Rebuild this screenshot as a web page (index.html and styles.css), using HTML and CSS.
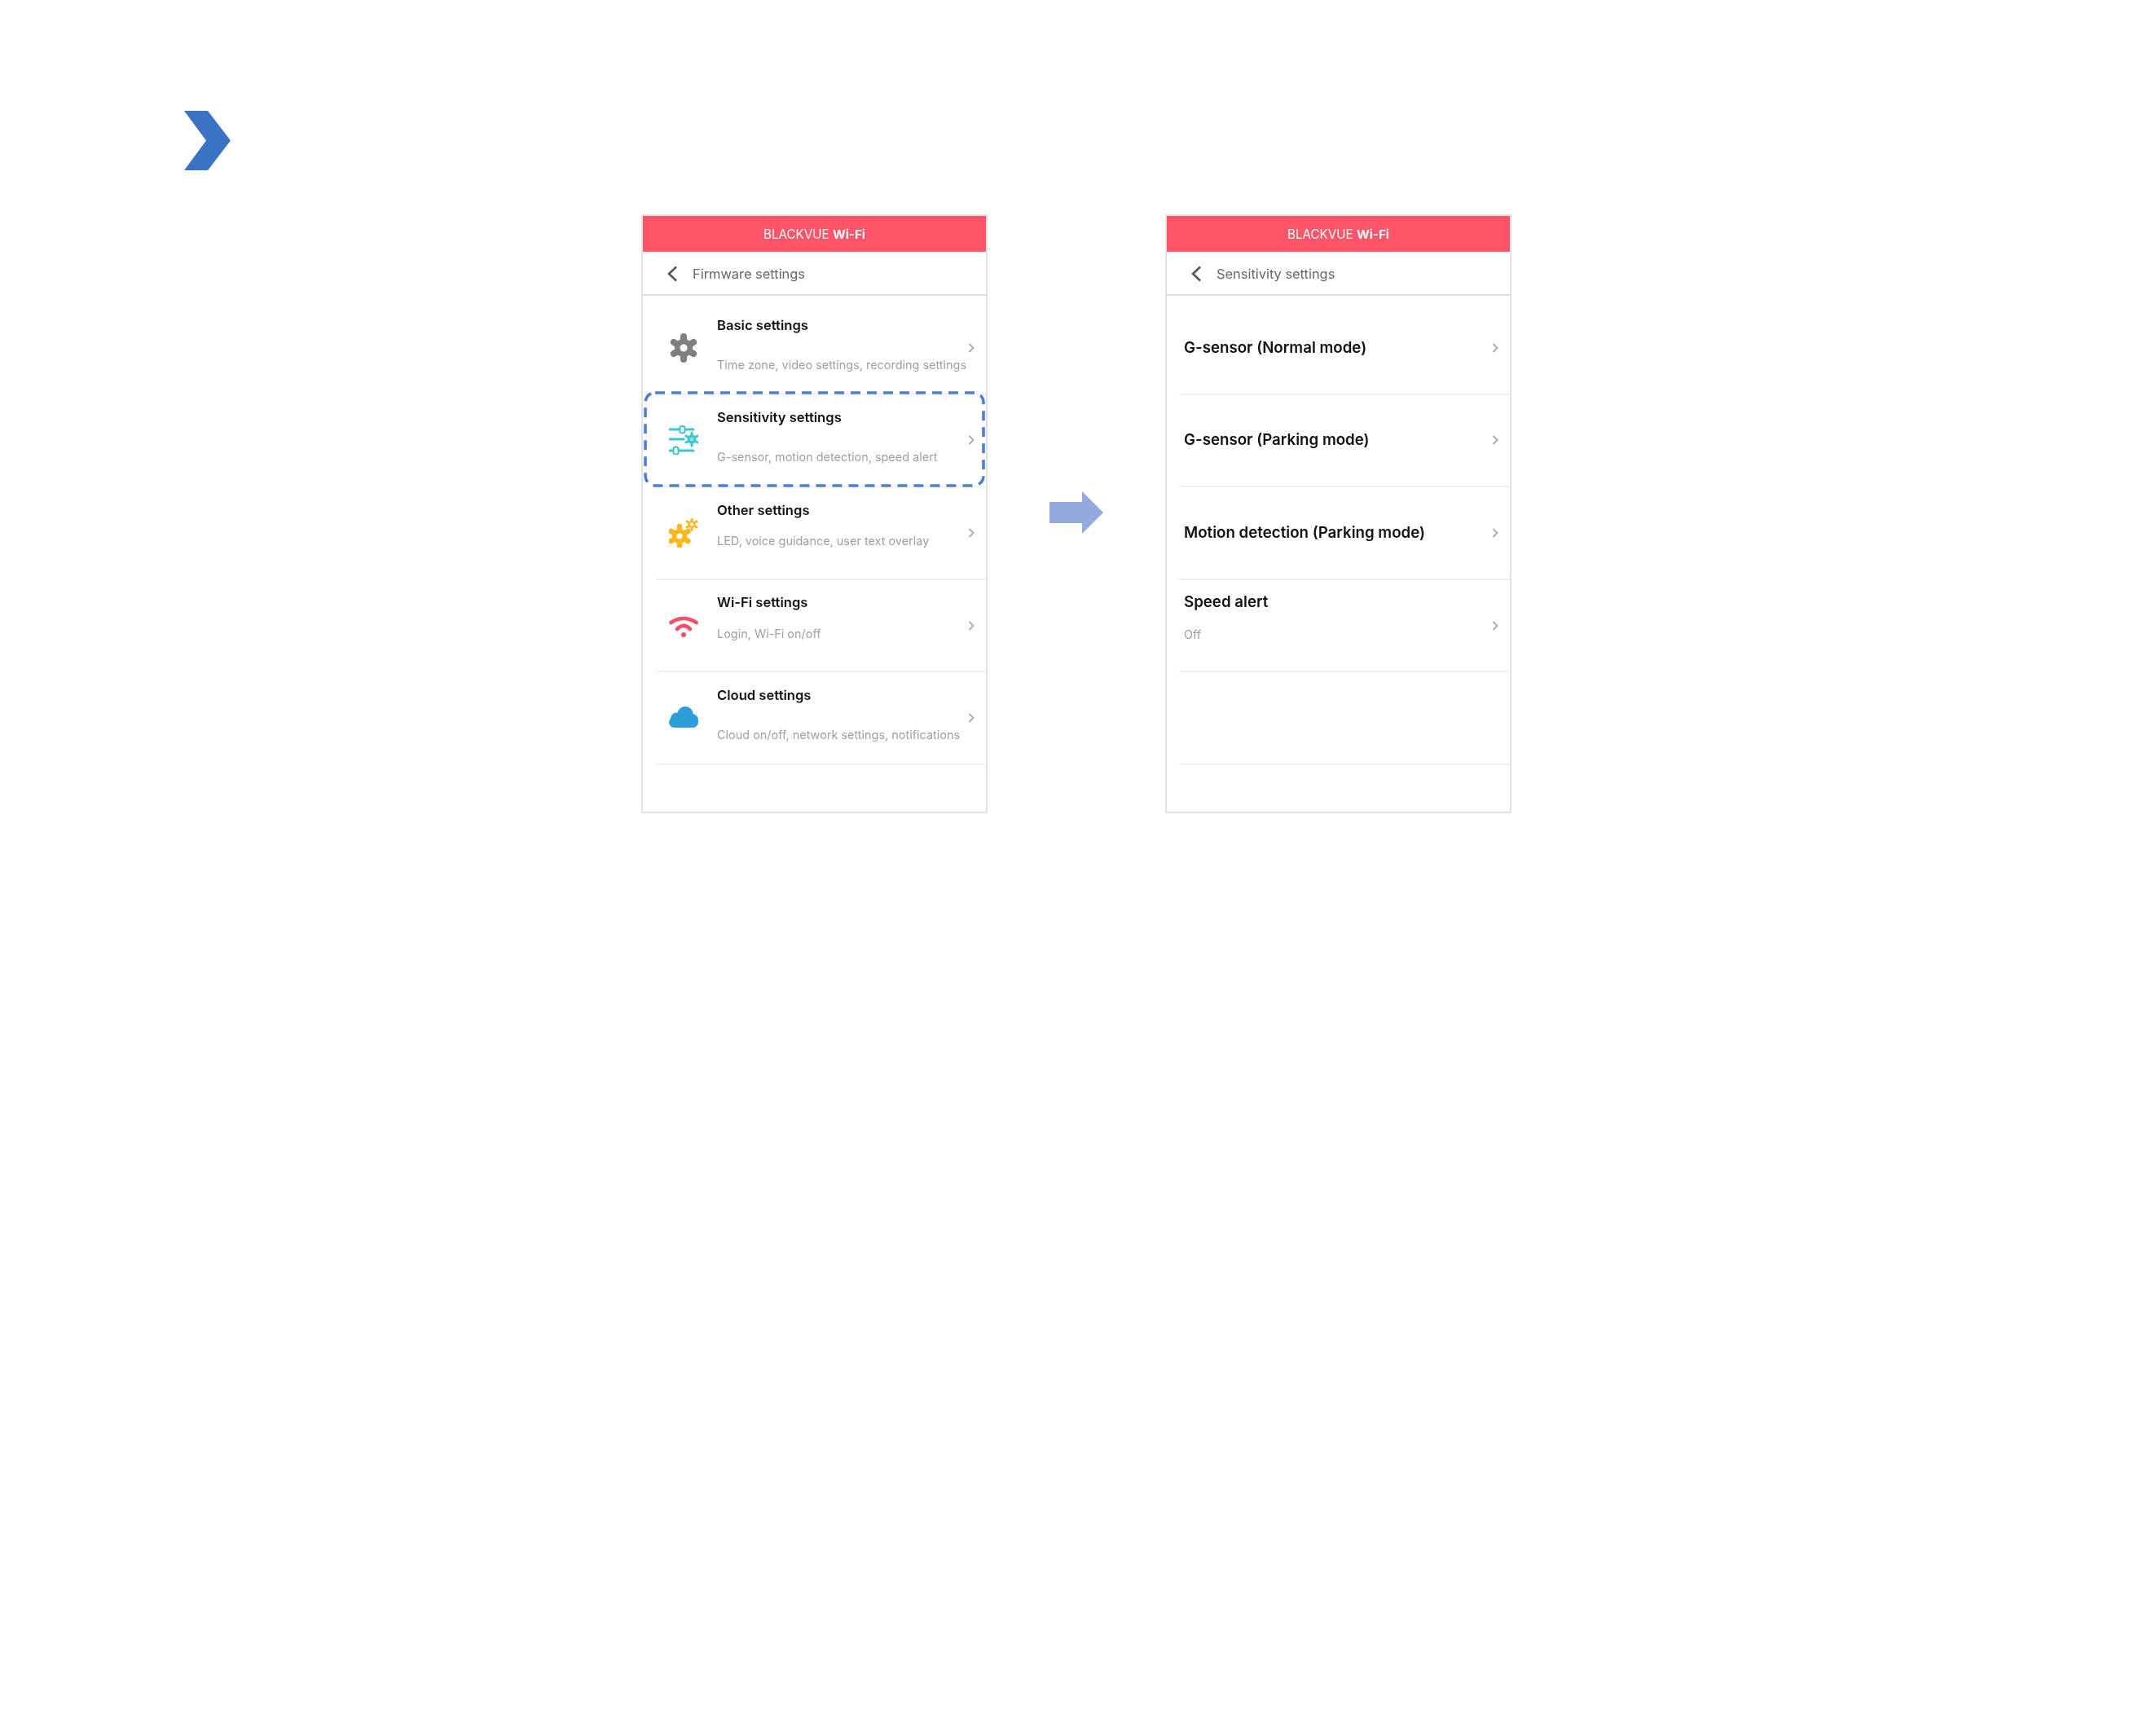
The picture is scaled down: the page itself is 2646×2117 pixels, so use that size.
FILE: index.html
```html
<!DOCTYPE html>
<html lang="en">
<head>
<meta charset="utf-8">
<title>Sensitivity settings</title>
<link rel="stylesheet" href="styles.css">
</head>
<body>
<header class="marker">
  <svg class="marker-icon" viewBox="0 0 57 73"><polygon points="0,0 29,0 57,36.5 29,73 0,73 27,36.5"/></svg>
</header>
<main class="stage">
  <section class="phone">
    <div class="appbar">BLACKVUE <b>Wi-Fi</b></div>
    <div class="subbar">
      <svg class="back" viewBox="0 0 14 20"><polyline points="12,1.5 3,10 12,18.5"/></svg>
      <span class="subbar-title">Firmware settings</span>
    </div>
    <div class="list">
      <div class="row">
        <svg class="icon" viewBox="0 0 36 36">
          <g class="gear-grey"><line x1="18" y1="4" x2="18" y2="32"/><line x1="5.9" y1="11" x2="30.1" y2="25"/><line x1="5.9" y1="25" x2="30.1" y2="11"/></g>
          <circle class="fill-grey" cx="18" cy="18" r="11"/><circle class="fill-white" cx="18" cy="18" r="4.5"/>
        </svg>
        <div class="text"><div class="title">Basic settings</div><div class="sub">Time zone, video settings, recording settings</div></div>
        <svg class="chev" viewBox="0 0 8 12"><polyline points="1.5,1 6.5,6 1.5,11"/></svg>
      </div>
      <div class="row">
        <svg class="icon" viewBox="0 0 36 36">
          <g class="sliders"><line x1="1" y1="5" x2="30" y2="5"/><line x1="1" y1="17" x2="18" y2="17"/><line x1="1" y1="31" x2="30" y2="31"/></g>
          <rect class="knob" x="13.5" y="1" width="6" height="8.500" rx="2.500"/><rect class="knob" x="5.500" y="26.500" width="6" height="9" rx="2.500"/>
          <g class="sliders-thin"><line x1="28" y1="9" x2="28" y2="25"/><line x1="21" y1="13" x2="35" y2="21"/><line x1="21" y1="21" x2="35" y2="13"/></g>
          <circle class="fill-teal" cx="28" cy="17" r="5.500"/><circle class="fill-teal-light" cx="28" cy="17" r="2.500"/>
        </svg>
        <div class="text"><div class="title">Sensitivity settings</div><div class="sub">G-sensor, motion detection, speed alert</div></div>
        <svg class="chev" viewBox="0 0 8 12"><polyline points="1.5,1 6.5,6 1.5,11"/></svg>
      </div>
      <div class="row">
        <svg class="icon" viewBox="0 0 36 36">
          <g class="gear-yellow"><line x1="13" y1="10" x2="13" y2="34"/><line x1="2.6" y1="16" x2="23.4" y2="28"/><line x1="2.6" y1="28" x2="23.4" y2="16"/></g>
          <circle class="fill-yellow" cx="13" cy="22" r="9"/><circle class="fill-white" cx="13" cy="22" r="3.5"/>
          <g class="gear-yellow-small"><line x1="28" y1="0.5" x2="28" y2="14.5"/><line x1="22" y1="4" x2="34" y2="11"/><line x1="22" y1="11" x2="34" y2="4"/></g>
          <circle class="fill-yellow" cx="28" cy="7.5" r="4.5"/><circle class="fill-white" cx="28" cy="7.5" r="2.2"/>
        </svg>
        <div class="text"><div class="title">Other settings</div><div class="sub sub-tight">LED, voice guidance, user text overlay</div></div>
        <svg class="chev" viewBox="0 0 8 12"><polyline points="1.5,1 6.5,6 1.5,11"/></svg>
      </div>
      <div class="row">
        <svg class="icon" viewBox="0 0 36 36">
          <path class="wifi" d="M2.500 14 Q18 4 33.500 14"/><path class="wifi" d="M10 22 Q18 14 26 22"/><circle class="fill-red" cx="18" cy="29" r="3"/>
        </svg>
        <div class="text"><div class="title">Wi-Fi settings</div><div class="sub sub-mid">Login, Wi-Fi on/off</div></div>
        <svg class="chev" viewBox="0 0 8 12"><polyline points="1.5,1 6.500,6 1.500,11"/></svg>
      </div>
      <div class="row">
        <svg class="icon" viewBox="0 0 36 36">
          <rect class="fill-blue" x="0" y="17" width="36" height="13" rx="6.500"/>
          <circle class="fill-blue" cx="20" cy="14" r="10"/><circle class="fill-blue" cx="9.500" cy="19" r="7.500"/><circle class="fill-blue" cx="28" cy="21" r="8"/>
        </svg>
        <div class="text"><div class="title">Cloud settings</div><div class="sub">Cloud on/off, network settings, notifications</div></div>
        <svg class="chev" viewBox="0 0 8 12"><polyline points="1.5,1 6.500,6 1.500,11"/></svg>
      </div>
    </div>
    <svg class="highlight" viewBox="0 0 419 118"><rect x="2" y="2" width="415" height="114" rx="12"/></svg>
  </section>

  <svg class="arrow" viewBox="0 0 66 52"><polygon points="0,13 40,13 40,0 66,26 40,52 40,39 0,39"/></svg>

  <section class="phone">
    <div class="appbar">BLACKVUE <b>Wi-Fi</b></div>
    <div class="subbar">
      <svg class="back" viewBox="0 0 14 20"><polyline points="12,1.5 3,10 12,18.5"/></svg>
      <span class="subbar-title">Sensitivity settings</span>
    </div>
    <div class="list">
      <div class="row row-plain"><div class="text"><div class="title-lg">G-sensor (Normal mode)</div></div><svg class="chev" viewBox="0 0 8 12"><polyline points="1.5,1 6.500,6 1.500,11"/></svg></div>
      <div class="row row-plain"><div class="text"><div class="title-lg">G-sensor (Parking mode)</div></div><svg class="chev" viewBox="0 0 8 12"><polyline points="1.5,1 6.500,6 1.500,11"/></svg></div>
      <div class="row row-plain"><div class="text"><div class="title-lg">Motion detection (Parking mode)</div></div><svg class="chev" viewBox="0 0 8 12"><polyline points="1.5,1 6.500,6 1.500,11"/></svg></div>
      <div class="row row-plain"><div class="text text-top"><div class="title-lg">Speed alert</div><div class="sub sub-mid">Off</div></div><svg class="chev" viewBox="0 0 8 12"><polyline points="1.5,1 6.500,6 1.500,11"/></svg></div>
      <div class="row row-plain"></div>
    </div>
  </section>
</main>
</body>
</html>
```

FILE: styles.css
```css
* { box-sizing: border-box; }
html, body { margin: 0; padding: 0; background: #fff; }
body { min-height: 2117px; font-family: "Inter", "Liberation Sans", sans-serif; }

.marker { padding: 136px 0 0 226px; height: 263px; }
.marker-icon { display: block; width: 57px; height: 73px; fill: #3b73c4; }

.stage { display: flex; align-items: flex-start; padding-left: 787px; }

.phone {
  position: relative;
  width: 425px;
  height: 735px;
  border: 2px solid #e2e2e2;
  background: #fff;
}
.phone + .arrow { margin-left: 76px; }
.arrow + .phone { margin-left: 76px; }

.appbar {
  height: 44px;
  padding-top: 1px;
  background: #fd5468;
  color: #fff;
  font-size: 15.2px;
  line-height: 44px;
  text-align: center;
  filter: blur(0.6px);
}
.appbar b { font-weight: 700; }

.subbar {
  display: flex;
  align-items: center;
  height: 54px;
  padding: 2px 0 0 29px;
  border-bottom: 2px solid #dcdcdc;
}
.back { width: 14px; height: 20px; fill: none; stroke: #555; stroke-width: 2.6; filter: blur(0.5px); }
.subbar-title { margin-left: 18px; font-size: 16.4px; color: #666; filter: blur(0.6px); }

.list { padding-top: 8px; }

.row {
  display: flex;
  align-items: center;
  height: 113.6px;
  margin-left: 16px;
  padding-left: 16px;
  border-bottom: 2px solid #f0f0f0;
}
.row-plain { margin-left: 15px; padding-left: 6px; }

.icon { flex: none; width: 36px; height: 36px; margin-right: 23px; filter: blur(0.6px); }
.text { flex: 1; min-width: 0; align-self: flex-start; padding-top: 17.5px; filter: blur(0.6px); }
.row-plain .text { align-self: center; padding-top: 0; }
.row-plain .text-top { align-self: flex-start; padding-top: 16px; }

.title { font-size: 16.6px; line-height: 20px; font-weight: 600; color: #111; white-space: nowrap; }
.title-lg { font-size: 18.7px; line-height: 22px; font-weight: 600; color: #111; white-space: nowrap; }
.sub { margin-top: 29px; font-size: 14.45px; line-height: 20px; color: #a0a0a0; white-space: nowrap; }
.sub-tight { margin-top: 18px; }
.sub-mid { margin-top: 19px; }

.chev {
  flex: none;
  width: 8px;
  height: 12px;
  margin-right: 14px;
  fill: none;
  stroke: #aaa;
  stroke-width: 1.8;
  filter: blur(0.3px);
}

.highlight {
  position: absolute;
  left: 1px;
  top: 215px;
  width: 419px;
  height: 118px;
  fill: none;
  stroke: #5080cd;
  stroke-width: 3.6;
  stroke-dasharray: 12 8;
}

.arrow { flex: none; width: 66px; height: 52px; margin-top: 340px; fill: #94a9df; }

.gear-grey line { stroke: #7d7f83; stroke-width: 8; stroke-linecap: round; }
.fill-grey { fill: #7d7f83; }
.fill-white { fill: #fff; }
.gear-yellow line { stroke: #fbb71c; stroke-width: 6.5; stroke-linecap: round; }
.gear-yellow-small line { stroke: #fbb71c; stroke-width: 3; stroke-linecap: round; }
.fill-yellow { fill: #fbb71c; }
.sliders line { stroke: #3dc5cf; stroke-width: 3; stroke-linecap: round; }
.sliders-thin line { stroke: #3dc5cf; stroke-width: 3; stroke-linecap: round; }
.knob { fill: #fff; stroke: #3dc5cf; stroke-width: 2; }
.fill-teal { fill: #3dc5cf; }
.fill-teal-light { fill: #8fdde3; }
.wifi { fill: none; stroke: #f5506a; stroke-width: 4.6; stroke-linecap: round; }
.fill-red { fill: #f5506a; }
.fill-blue { fill: #2c9fd8; }
```
